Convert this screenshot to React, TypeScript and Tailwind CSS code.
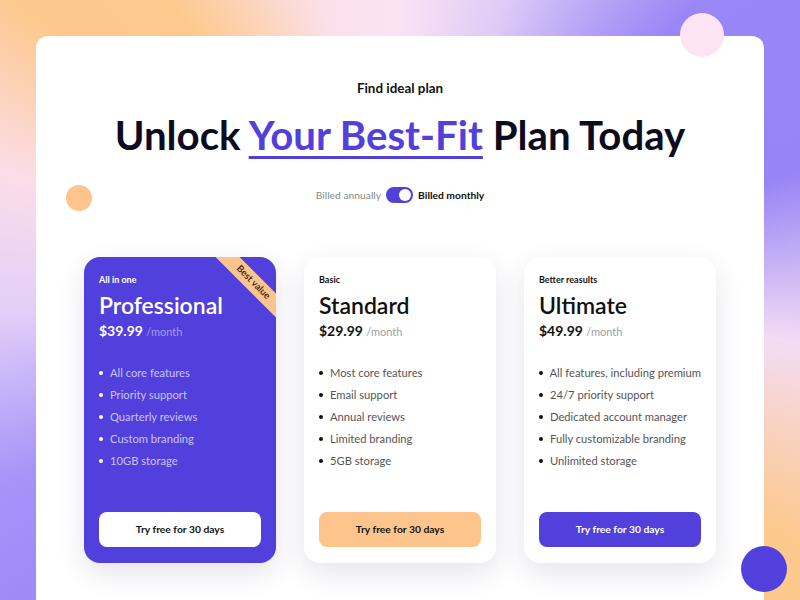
import { Fragment } from 'react';

type Plan = {
  tag: string;
  name: string;
  price: string;
  features: string[];
  variant: 'featured' | 'warm' | 'cool';
};

const plans: Plan[] = [
  {
    tag: 'All in one',
    name: 'Professional',
    price: '$39.99',
    features: ['All core features', 'Priority support', 'Quarterly reviews', 'Custom branding', '10GB storage'],
    variant: 'featured',
  },
  {
    tag: 'Basic',
    name: 'Standard',
    price: '$29.99',
    features: ['Most core features', 'Email support', 'Annual reviews', 'Limited branding', '5GB storage'],
    variant: 'warm',
  },
  {
    tag: 'Better reasults',
    name: 'Ultimate',
    price: '$49.99',
    features: [
      'All features, including premium',
      '24/7 priority support',
      'Dedicated account manager',
      'Fully customizable branding',
      'Unlimited storage',
    ],
    variant: 'cool',
  },
];

const PlanCard = ({ plan }: { plan: Plan }) => {
  const featured = plan.variant === 'featured';

  return (
    <div
      className={
        featured
          ? 'relative flex flex-col w-[192px] h-[306px] rounded-2xl overflow-hidden bg-[#5140dc] text-white px-[15px] pt-[17px] pb-4 shadow-[0_10px_28px_rgba(40,30,90,0.12)]'
          : 'relative flex flex-col w-[192px] h-[306px] rounded-2xl overflow-hidden bg-white text-[#111] px-[15px] pt-[17px] pb-4 shadow-[0_10px_28px_rgba(40,30,90,0.12)]'
      }
    >
      {featured && (
        <div className="absolute right-[-27px] top-[17px] w-[100px] h-[17px] rotate-45 bg-[#fdc58b] flex items-center justify-center text-[9.5px] font-semibold text-[#2a1d10]">
          Best value
        </div>
      )}
      <p className="text-[9px] leading-3 font-bold">{plan.tag}</p>
      <h2 className="mt-[5px] text-[23px] leading-7 font-semibold">{plan.name}</h2>
      <p className="mt-[3px] text-[14px] leading-[18px] font-bold">
        {plan.price}{' '}
        <span className={featured ? 'text-[11px] font-normal text-[#a69cf0]' : 'text-[11px] font-normal text-[#a0a0a0]'}>
          /month
        </span>
      </p>
      <ul className="mt-[21px]">
        {plan.features.map((f) => (
          <li
            key={f}
            className={
              featured
                ? 'flex items-center gap-[7px] text-[11.2px] leading-[22px] text-[#c9c3f6] whitespace-nowrap'
                : 'flex items-center gap-[7px] text-[11.2px] leading-[22px] text-[#555] whitespace-nowrap'
            }
          >
            <span className={featured ? 'w-1 h-1 rounded-full bg-white' : 'w-1 h-1 rounded-full bg-[#111]'} />
            {f}
          </li>
        ))}
      </ul>
      <button
        className={
          plan.variant === 'featured'
            ? 'mt-auto h-[35px] w-full rounded-lg bg-white text-[#111] text-[10.3px] font-bold'
            : plan.variant === 'warm'
              ? 'mt-auto h-[35px] w-full rounded-lg bg-[#fdc58b] text-[#111] text-[10.3px] font-bold'
              : 'mt-auto h-[35px] w-full rounded-lg bg-[#5140dc] text-white text-[10.3px] font-bold'
        }
      >
        Try free for 30 days
      </button>
    </div>
  );
};

export default function App() {
  return (
    <div className="relative w-[800px] h-[600px] overflow-hidden px-[36px] pt-[36px] font-['Lato','Liberation_Sans',sans-serif] bg-[conic-gradient(from_0deg_at_50%_50%,#fbe3f4_0deg,#ddcaf7_20deg,#9a87f6_45deg,#9784f6_72deg,#f3dcf5_96deg,#fdc88c_122deg,#fdc88c_150deg,#f6dcf3_180deg,#9a86f8_225deg,#a694f8_245deg,#e2cef8_268deg,#fbdde9_288deg,#fdc88d_308deg,#fdc98d_322deg,#fbe0ea_345deg,#fbe3f4_360deg)]">
      <div className="relative h-full bg-white rounded-t-xl flex flex-col items-center pt-[42px]">
        <p className="text-[13.4px] leading-5 font-bold text-[#111]">Find ideal plan</p>
        <h1 className="mt-[13px] text-[40.2px] leading-[48px] font-bold text-[#0d0b1e]">
          Unlock{' '}
          <span className="text-[#5140dc] underline decoration-[3px] underline-offset-[6px]">Your Best-Fit</span>{' '}
          Plan Today
        </h1>
        <div className="mt-[28px] flex items-center gap-[5px] text-[10.3px] leading-4">
          <span className="text-[#8a8a8a]">Billed annually</span>
          <span className="w-[27px] h-4 rounded-full bg-[#5140dc] flex items-center justify-end pr-[2px]">
            <span className="w-3 h-3 rounded-full bg-white" />
          </span>
          <span className="font-bold text-[#111]">Billed monthly</span>
        </div>
        <div className="mt-[54px] flex gap-[28px]">
          {plans.map((p) => (
            <Fragment key={p.name}>
              <PlanCard plan={p} />
            </Fragment>
          ))}
        </div>
      </div>

      <span className="absolute left-[680px] top-[13px] w-[44px] h-[44px] rounded-full bg-[#fce4f4]" />
      <span className="absolute left-[66px] top-[185px] w-[26px] h-[26px] rounded-full bg-[#fdc58b]" />
      <span className="absolute left-[741px] top-[546px] w-[46px] h-[46px] rounded-full bg-[#5140dc]" />
    </div>
  );
}
